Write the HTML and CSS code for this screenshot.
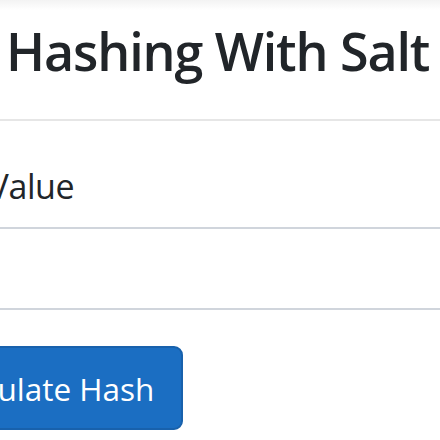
FILE: index.html
```html
<!DOCTYPE html>
<html lang="en">
<head>
  <meta charset="UTF-8" />
  <meta name="viewport" content="width=device-width, initial-scale=1.0"/>
  <title>Hashing With Salt</title>
  <link rel="stylesheet" href="styles.css">
</head>
<body>
  <div class="navbar-edge"></div>
  <main class="container">
    <h1 class="page-title">Hashing With Salt</h1>
    <hr class="divider" />

    <form class="hash-form" onsubmit="return false;">
      <label for="inputValue" class="form-label">Input Value</label>
      <input type="text" id="inputValue" class="form-control" />
      <button type="submit" class="btn-primary">Calculate Hash</button>
    </form>
  </main>
</body>
</html>
```

FILE: styles.css
```css
body {
  margin: 0;
  background: #fff;
  color: #212529;
  font-family: "Open Sans", "Noto Sans", sans-serif;
  overflow: hidden;
}

.navbar-edge {
  height: 10px;
  background: linear-gradient(#f3f3f3, #fff);
}

.container {
  margin-left: -102px;
  width: 700px;
}

.page-title {
  margin: 9px 0 0;
  padding-left: 108px;
  font-size: 52px;
  font-weight: 600;
  letter-spacing: -1.1px;
  line-height: 64px;
}

.divider {
  margin: 36px 0 0;
  border: none;
  border-top: 2px solid #e6e6e6;
}

.hash-form {
  display: flex;
  flex-direction: column;
  align-items: flex-start;
}

.form-label {
  margin-top: 40px;
  font-size: 34px;
  letter-spacing: -0.4px;
  line-height: 50px;
}

.form-control {
  box-sizing: border-box;
  width: 100%;
  height: 83px;
  margin-top: 16px;
  border: 2px solid #d0d5dc;
  border-radius: 0;
  background: #fff;
  font-size: 35px;
}

.btn-primary {
  box-sizing: border-box;
  height: 84px;
  margin-top: 36px;
  padding: 0 27px 0 37px;
  background: #1b6ec2;
  border: 2px solid #1861ac;
  border-radius: 9px;
  color: #fff;
  font-family: inherit;
  font-size: 31.5px;
  cursor: pointer;
}
```
